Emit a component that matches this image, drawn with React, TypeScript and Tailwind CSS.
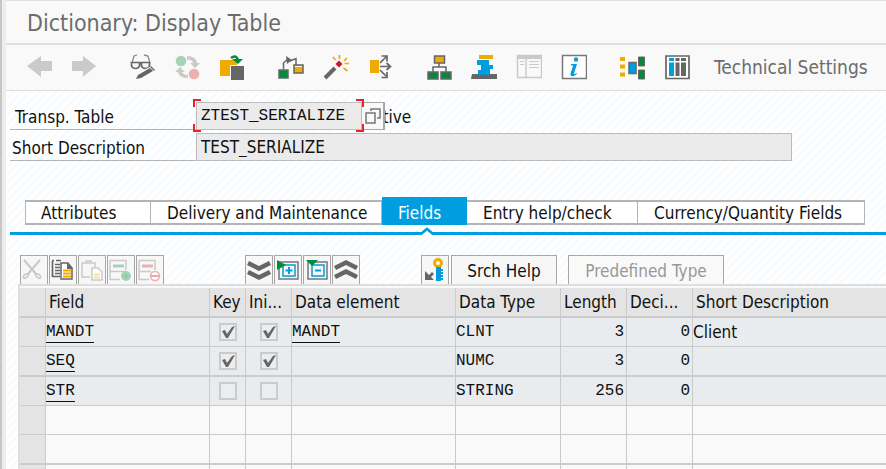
import type { ReactNode } from "react";

const GRAY = "#666666";
const GREEN = "#008c3c";
const ORANGE = "#f0ab00";
const BLUE = "#009de0";

function Icon({ children, size = 26 }: { children: ReactNode; size?: number }) {
  return (
    <svg width={size} height={size} viewBox={`0 0 ${size} ${size}`} fill="none" aria-hidden="true" className="block shrink-0">
      {children}
    </svg>
  );
}

const toolbarGroups: { label: string; icon: ReactNode }[][] = [
  [
    { label: "Previous object", icon: <path d="M0 12 14 2v5h11v10H14v6z" fill="#cacaca" /> },
    { label: "Next object", icon: <path d="M24 12 11 2v5H-1v10h12v6z" fill="#cacaca" /> },
  ],
  [
    {
      label: "Display and change",
      icon: (
        <>
          <path d="M2 9 4 2l3-1M20 9l-2-7-4-1" stroke="#8a8a8a" strokeWidth="1.3" />
          <path d="M1.500 8.500h8v3.500q-1 2.500-4 2.500t-4-2.500zM11.500 8.500h8v3.500q-1 2.500-4 2.500t-4-2.500zM9.500 9.500h2" stroke={GRAY} strokeWidth="1.700" />
          <path d="m11 22 12-7" stroke="#f9f9f9" strokeWidth="7" />
          <path d="m6 25 2-4 12-7 3 3-12 7zM21 12l4 4-1 1-4-4z" fill={GRAY} />
        </>
      ),
    },
    {
      label: "Active and inactive",
      icon: (
        <>
          <circle cx="6" cy="7" r="5.300" fill="#a5d3b8" />
          <circle cx="19" cy="20" r="5.300" fill="#edb0b0" />
          <path d="M12 2q9 0 10 7h3l-5 5-5-5h3q-1-4-6-3z" fill="#cacaca" />
          <path d="M13 24q-9 0-10-6H0l5-5 5 5H7q1 3 6 3z" fill="#cacaca" />
        </>
      ),
    },
    {
      label: "Other object",
      icon: (
        <>
          <path d="M0 6h17v16H0z" fill={ORANGE} />
          <path d="M10.500 11.500h14v15h-14z" fill={GRAY} stroke="#f9f9f9" />
          <path d="M11 4q5-4 7 2" stroke={GREEN} strokeWidth="2.500" />
          <path d="M12 5h11l-5 5z" fill={GREEN} />
        </>
      ),
    },
  ],
  [
    {
      label: "Check",
      icon: (
        <>
          <path d="M5.500 15V9L10 5M12 7l6-2.500V11" stroke={GRAY} strokeWidth="1.500" />
          <path d="m8 2 6 4-5 4z" fill={GRAY} />
          <path d="M1 16h9v8H1z" fill={GREEN} stroke={GRAY} strokeWidth="1.500" />
          <path d="M16 11h9v8h-9z" fill={ORANGE} stroke={GRAY} strokeWidth="1.500" />
          <path d="M17 12.500h7" stroke="#fff" />
        </>
      ),
    },
    {
      label: "Activate",
      icon: (
        <>
          <path d="m2 24 10-10" stroke={GRAY} strokeWidth="4" />
          <path d="m16 6.500 3.500 3.500-3.500 3.500-3.500-3.500z" fill="#d8141b" />
          <path d="M16.500 1v4M10 3l2.500 3M24 4l-3 3M21.500 9.500H26M20.500 14l4 3" stroke={ORANGE} strokeWidth="1.700" />
        </>
      ),
    },
    {
      label: "Where-used list",
      icon: (
        <>
          <path d="M2 6h9v13H2z" fill={ORANGE} />
          <path d="m12 9 6-6M12 12.500h9M12 16l6 6M13.500 2H19v5.500M18.500 9l4 3.500-4 3.500M13.500 23.500H19V18" stroke={GRAY} strokeWidth="1.700" />
        </>
      ),
    },
  ],
  [
    {
      label: "Hierarchy",
      icon: (
        <>
          <path d="M13 9v4M7 18v-5h13v5" stroke={GRAY} strokeWidth="1.500" />
          <path d="M8.500 2h10v7h-10z" fill={ORANGE} stroke={GRAY} strokeWidth="1.500" />
          <path d="M2 18h10v7H2zM15 18h10v7H15z" fill={GREEN} stroke={GRAY} strokeWidth="1.500" />
        </>
      ),
    },
    {
      label: "Object list",
      icon: (
        <>
          <path d="M8 1h14v4H8z" fill={ORANGE} />
          <path d="M6 6h12v5h4v4h-3v5H7v-4h3v-5H6z" fill={BLUE} />
          <path d="M1 20h25v5H0z" fill={GRAY} />
          <path d="M7 20h12" stroke={BLUE} strokeWidth="1.500" />
        </>
      ),
    },
    {
      label: "Table contents",
      icon: (
        <>
          <path d="M1.500 1.500h24v22h-24zM10 4v20" stroke="#cacaca" strokeWidth="1.500" />
          <path d="M1 1h25v4H1z" fill="#cacaca" />
          <path d="M4 7.500h4M4 10.500h4M13 7.500h10M13 10.500h10M13 13.500h10" stroke="#cacaca" />
        </>
      ),
    },
    {
      label: "Information",
      icon: (
        <>
          <path d="M1.500 1.500h24v23h-24z" fill="#fff" stroke="#777" strokeWidth="1.500" />
          <path d="M10 10h6l-3 9.500q0 1.500 2.500-.5l.5.800q-2.500 3-5.500 2.200-1.500-.5-1-2.500l2.500-7.500q-.5-1-2.200-.8z" fill={BLUE} />
          <circle cx="15" cy="5.500" r="2.200" fill={BLUE} />
        </>
      ),
    },
  ],
  [
    {
      label: "Append structure",
      icon: (
        <>
          <path d="M1 3h5v4H1zM1 10.500h5v4H1zM1 18.500h5v4H1z" fill={ORANGE} />
          <path d="M10 8.500h7v11h-7z" fill={BLUE} stroke={GRAY} strokeWidth="1.500" />
          <path d="M19.500 3h6v9h-6zM19.500 16h6v9h-6z" fill={GREEN} stroke={GRAY} />
        </>
      ),
    },
    {
      label: "Table columns",
      icon: (
        <>
          <path d="M2 2h23v22.500H2z" fill="#fff" stroke={GRAY} strokeWidth="1.700" />
          <path d="M5 4h5v3H5zM5 8.500h5V22H5z" fill={BLUE} />
          <path d="M11.500 4h4v3h-4zM11.500 8.500h4V22h-4zM17 4h5v3h-5zM17 8.500h5V22h-5z" fill={GRAY} />
        </>
      ),
    },
  ],
];

const editTools: { label: string; icon: ReactNode }[] = [
  {
    label: "Cut",
    icon: (
      <>
        <path d="m2 2 13 15M18 2 5 17" stroke="#c9c9c9" strokeWidth="2.200" />
        <path d="M5 16q-4 0-3.500 4 3 1 5-3zM15 16q4 0 3.500 4-3 1-5-3z" stroke="#c9c9c9" strokeWidth="1.500" />
      </>
    ),
  },
  {
    label: "Copy",
    icon: (
      <>
        <path d="M1.500 3v16M10 2.500H5M1 2.500h2M4 6.500h5M4 9.500h5M4 12.500h5M4 15.500h5M1 18.500h8" stroke={GRAY} strokeWidth="1.700" />
        <path d="M10 5h7l4 5v11H10z" fill="#fff" stroke={GRAY} strokeWidth="1.500" />
        <path d="M16 5v6h6" fill={GRAY} />
        <path d="M12 12.500h8M12 15.500h8M12 18.500h8" stroke={ORANGE} strokeWidth="2" />
      </>
    ),
  },
  {
    label: "Paste",
    icon: (
      <>
        <path d="M10 19H2V5h13v4M6 5V3h5v2" stroke="#cacaca" strokeWidth="1.500" />
        <path d="M12 10h6l4 4v8H12z" fill="#fff" stroke="#cacaca" strokeWidth="1.500" />
        <path d="M14 16.500h6M14 19.500h6" stroke="#f7dfa5" strokeWidth="2" />
      </>
    ),
  },
  {
    label: "Insert row",
    icon: (
      <>
        <path d="M17 12V2.500H1M1 13.500h16M1 22V2.500M1 21.500h10" stroke="#cacaca" strokeWidth="1.500" />
        <path d="M4 8h11" stroke="#a5d3b8" strokeWidth="3" />
        <circle cx="17" cy="18" r="5" fill="#a5d3b8" />
        <path d="M14 18h6M17 15v6" stroke="#8bc7a4" />
      </>
    ),
  },
  {
    label: "Delete row",
    icon: (
      <>
        <path d="M17 12V2.500H1M1 13.500h12M1 22V2.500M1 21.500h10" stroke="#cacaca" strokeWidth="1.500" />
        <path d="M4 8h11" stroke="#edb0b0" strokeWidth="3" />
        <circle cx="17" cy="18" r="4.500" fill="#fff" stroke="#edb0b0" strokeWidth="1.500" />
        <path d="M13 18h8" stroke="#e79a9a" strokeWidth="1.700" />
      </>
    ),
  },
];

const viewTools: { label: string; icon: ReactNode }[] = [
  { label: "Page down", icon: <path d="m1 5 11 5.500L23 5M1 14l11 5.500L23 14" stroke={GRAY} strokeWidth="4.500" /> },
  {
    label: "Expand",
    icon: (
      <>
        <path d="M3 4h19v17H3z" stroke="#777" strokeWidth="1.500" />
        <path d="M7 7h12v11H7z" stroke={BLUE} strokeWidth="1.500" />
        <path d="M13 9v7M9.500 12.500h7" stroke={BLUE} strokeWidth="2" />
        <path d="m1 2 9 5-9 5z" fill={GREEN} />
      </>
    ),
  },
  {
    label: "Collapse",
    icon: (
      <>
        <path d="M3 4h19v17H3z" stroke="#777" strokeWidth="1.500" />
        <path d="M7 7h12v11H7z" stroke={BLUE} strokeWidth="1.500" />
        <path d="M10 12.500h6" stroke={BLUE} strokeWidth="2" />
        <path d="M1 2h12L7 8z" fill={GREEN} />
      </>
    ),
  },
  { label: "Page up", icon: <path d="m1 10 11-5.500L23 10M1 19l11-5.500L23 19" stroke={GRAY} strokeWidth="4.500" /> },
];

const keyIcon = (
  <>
    <circle cx="15" cy="5" r="3.500" stroke={ORANGE} strokeWidth="3" />
    <path d="M13 9h5v14h-5z" fill={BLUE} />
    <path d="M19 11v11" stroke={BLUE} strokeWidth="2" strokeDasharray="2 1" />
    <path d="M2 13v9h9l-3-3 3-3-2-2-3 3z" fill={GRAY} />
  </>
);

const tabs = [
  { label: "Attributes", width: "w-[126px] pl-[15px]" },
  { label: "Delivery and Maintenance", width: "w-[231px] pl-4" },
  { label: "Fields", width: "w-[85px] pl-4", active: true },
  { label: "Entry help/check", width: "w-[171px] pl-4" },
  { label: "Currency/Quantity Fields", width: "w-[227px] pl-4" },
];

const rows = [
  { field: "MANDT", key: true, initial: true, element: "MANDT", type: "CLNT", length: "3", decimals: "0", text: "Client" },
  { field: "SEQ", key: true, initial: true, element: "", type: "NUMC", length: "3", decimals: "0", text: "" },
  { field: "STR", key: false, initial: false, element: "", type: "STRING", length: "256", decimals: "0", text: "" },
];

const headers = ["Field", "Key", "Ini...", "Data element", "Data Type", "Length", "Deci...", "Short Description"];

const sans = "font-['DejaVu_Sans_Condensed','DejaVu_Sans','Noto_Sans',sans-serif]";
const mono = "text-[16px] font-['Liberation_Mono',monospace]";

function ToolButton({ label, children }: { label: string; children: ReactNode }) {
  return (
    <button
      type="button"
      aria-label={label}
      className="flex h-[29px] w-7 shrink-0 items-center justify-center border border-b-0 border-[#a6a6a6] bg-[#f7f7f7]"
    >
      <Icon size={24}>{children}</Icon>
    </button>
  );
}

function Tick({ checked, label }: { checked: boolean; label: string }) {
  return (
    <label className="relative mx-auto block h-[18px] w-[18px]">
      <input
        type="checkbox"
        aria-label={label}
        defaultChecked={checked}
        className="peer block h-[18px] w-[18px] appearance-none border-2 border-[#cbcbcb] bg-[#ebedee]"
      />
      <svg viewBox="0 0 18 18" className="pointer-events-none absolute inset-0 hidden peer-checked:block" fill="none" aria-hidden="true">
        <path d="m3 8 3-1 2 4 5-7 3-1-7 12H7z" fill={GRAY} />
      </svg>
    </label>
  );
}

const cell = "border-r border-[#cbcbcb] p-0 whitespace-nowrap overflow-hidden last:border-r-0";

export default function App() {
  return (
    <div className={`flex h-screen overflow-hidden bg-[#ededed] text-[17px] leading-5 text-[#111] ${sans}`}>
      <div className="w-[6px] shrink-0 border-l-2 border-[#c6c6c6]" />
      <main className="flex min-w-0 flex-1 flex-col bg-[repeating-linear-gradient(135deg,#ffffff_0px,#ffffff_3px,#f9fcfe_3px,#f9fcfe_6px)]">
        <header className="shrink-0 bg-[#f9f9f9]">
          <h1 className="flex h-[45px] items-center border-t border-b-2 border-[#e0e0e0] pt-[2px] pl-[21px] text-[23px] font-normal text-[#6c6c6c]">
            Dictionary: Display Table
          </h1>
          <div className="flex h-[46px] items-center gap-8 border-b border-[#dedede] pb-[2px] pl-[21px]">
            {toolbarGroups.map((group) => (
              <div key={group[0].label} className="flex gap-[19px]">
                {group.map((tool) => (
                  <button key={tool.label} type="button" aria-label={tool.label}>
                    <Icon>{tool.icon}</Icon>
                  </button>
                ))}
              </div>
            ))}
            <button type="button" className="-ml-2 shrink-0 text-[19px] whitespace-nowrap text-[#6c6c6c]">
              Technical Settings
            </button>
          </div>
        </header>

        <form className="shrink-0 pt-[11px] pl-1">
          <div className="flex h-7 items-stretch">
            <label htmlFor="table-name" className="flex w-[186px] items-center border-b border-[#b4b4b4] pt-[2px] pl-[5px]">
              Transp. Table
            </label>
            <div className="relative z-10">
              <input
                id="table-name"
                readOnly
                defaultValue="ZTEST_SERIALIZE"
                className={`block h-7 w-[166px] border border-[#bdbdbd] bg-[#ebebeb] pl-1 outline-none ${mono}`}
              />
              <svg viewBox="0 0 171 33" className="pointer-events-none absolute -top-[3px] -left-[3px] h-[33px] w-[171px]" fill="none" aria-hidden="true">
                <path d="M8 1H1v7M163 1h7v7M8 32H1v-7M163 32h7v-7" stroke="#e8242b" strokeWidth="2" />
              </svg>
            </div>
            <div className="relative flex items-center pt-[2px] pl-[2px]">
              <span>Active</span>
              <button
                type="button"
                aria-label="Value help"
                className="absolute top-0 left-0 flex h-7 w-[23px] items-center justify-center border-t border-r-2 border-b border-[#a8a8a8] bg-[#f9f9f9]"
              >
                <svg width="16" height="16" viewBox="0 0 16 16" fill="none" stroke="#777" strokeWidth="1.500" aria-hidden="true">
                  <path d="M1 5h9v10H1zM6 3V1h9v9h-3" />
                </svg>
              </button>
            </div>
          </div>
          <div className="mt-[3px] flex h-7">
            <label htmlFor="short-description" className="flex w-[186px] items-center border-b border-[#b4b4b4] pt-[2px] pl-[2px]">
              Short Description
            </label>
            <input
              id="short-description"
              readOnly
              defaultValue="TEST_SERIALIZE"
              className="block h-7 w-[596px] border border-[#bdbdbd] bg-[#ebebeb] pl-1 outline-none"
            />
          </div>
        </form>

        <nav role="tablist" className="mt-9 flex shrink-0 items-end pl-[19px]">
          {tabs.map((tab) =>
            tab.active ? (
              <button
                key={tab.label}
                role="tab"
                aria-selected="true"
                className={`relative flex h-7 items-center bg-[#009de0] pt-[3px] text-white ${tab.width}`}
              >
                {tab.label}
                <svg viewBox="0 0 12 10" className="absolute top-[29px] left-[39px] z-10 h-[10px] w-3" fill="none" aria-hidden="true">
                  <path d="M1 7v3h10V7L6 3z" fill="#fff" />
                  <path d="m0 8 6-5 6 5" stroke="#009de0" strokeWidth="2.500" />
                </svg>
              </button>
            ) : (
              <button
                key={tab.label}
                role="tab"
                aria-selected="false"
                className={`flex h-[25px] items-center border-y-2 border-r border-[#b4b4b4] bg-white first:border-l ${tab.width}`}
              >
                {tab.label}
              </button>
            ),
          )}
        </nav>
        <div className="mt-[7px] ml-1 h-[3px] shrink-0 bg-[#009de0]" />

        <div className="mt-5 flex shrink-0 pl-[14px]">
          <div className="flex gap-px">
            {editTools.map((tool) => (
              <ToolButton key={tool.label} label={tool.label}>
                {tool.icon}
              </ToolButton>
            ))}
          </div>
          <div className="ml-[81px] flex gap-px">
            {viewTools.map((tool) => (
              <ToolButton key={tool.label} label={tool.label}>
                {tool.icon}
              </ToolButton>
            ))}
          </div>
          <div className="ml-[61px] flex gap-[2px]">
            <ToolButton label="Foreign keys">{keyIcon}</ToolButton>
            <button type="button" className="h-[29px] w-[106px] border border-b-0 border-[#a6a6a6] bg-[#f7f7f7] pt-[2px]">
              Srch Help
            </button>
          </div>
          <button type="button" className="ml-[11px] h-[29px] w-[156px] border border-b-0 border-[#a6a6a6] bg-[#f9f9f9] pt-[2px] text-[#979797]">
            Predefined Type
          </button>
        </div>

        <div className="ml-3 shrink-0 border-t-2 border-l-2 border-[#dedede] bg-[#f9f9f9] pt-[2px]">
          <table className="w-full table-fixed border-separate border-spacing-0">
            <colgroup>
              <col className="w-[26px]" />
              <col className="w-[164px]" />
              <col className="w-9" />
              <col className="w-[46px]" />
              <col className="w-[164px]" />
              <col className="w-[105px]" />
              <col className="w-[66px]" />
              <col className="w-[66px]" />
              <col />
            </colgroup>
            <thead>
              <tr className="h-[30px]">
                <th className="border-r border-b-2 border-[#cbcbcb] bg-[#e4e4e4] p-0" />
                {headers.map((header) => (
                  <th
                    key={header}
                    className="overflow-hidden border-r border-b-2 border-[#cbcbcb] bg-[#e4e4e4] p-0 pl-[3px] text-left font-normal whitespace-nowrap last:border-r-0"
                  >
                    {header}
                  </th>
                ))}
              </tr>
            </thead>
            <tbody className="[&>tr]:h-[29px] [&>tr:nth-child(3n+2)]:h-[30px] [&>tr>td]:border-b [&>tr:nth-child(3n+2)>td]:border-b-2">
              {rows.map((row) => (
                <tr key={row.field} className="bg-[#e8ecef]">
                  <td className={`${cell} bg-[#e4e4e4]`} />
                  <td className={`${cell} ${mono}`}>
                    <a href="#field" className="block w-fit border-b border-[#111]">{row.field}</a>
                  </td>
                  <td className={cell}><Tick checked={row.key} label={`${row.field} key`} /></td>
                  <td className={cell}><Tick checked={row.initial} label={`${row.field} initial values`} /></td>
                  <td className={`${cell} ${mono}`}>
                    {row.element && <a href="#element" className="block w-fit border-b border-[#111]">{row.element}</a>}
                  </td>
                  <td className={`${cell} ${mono}`}>{row.type}</td>
                  <td className={`${cell} pr-[2px] text-right ${mono}`}>{row.length}</td>
                  <td className={`${cell} pr-[2px] text-right ${mono}`}>{row.decimals}</td>
                  <td className={cell}>{row.text}</td>
                </tr>
              ))}
              {[4, 5, 6].map((row) => (
                <tr key={row}>
                  <td className={`${cell} bg-[#e4e4e4]`} />
                  {headers.map((header) => (
                    <td key={header} className={cell} />
                  ))}
                </tr>
              ))}
            </tbody>
          </table>
        </div>
      </main>
    </div>
  );
}
